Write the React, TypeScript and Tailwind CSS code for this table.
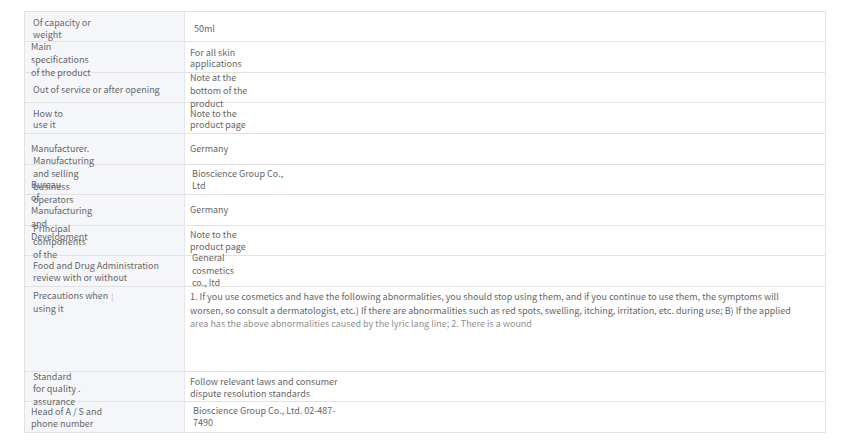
import React from "react";

type Cell = {
    lines: string[];
    pl: number;
    lh: number;
    shift?: number;
};

type Row = {
    h: number;
    top?: boolean;
    label: Cell;
    value: Cell;
};

const rows: Row[] = [
    {
        h: 30,
        label: { lines: ["Of capacity or", "weight"], pl: 8, lh: 12, shift: 2 },
        value: { lines: ["50ml"], pl: 9, lh: 12, shift: 2 },
    },
    {
        h: 31,
        label: { lines: ["Main", "specifications", "of the product"], pl: 6, lh: 13, shift: 2 },
        value: { lines: ["For all skin", "applications"], pl: 5, lh: 11.5, shift: 1 },
    },
    {
        h: 30,
        label: { lines: ["Out of service or after opening"], pl: 8, lh: 12, shift: 2 },
        value: { lines: ["Note at the", "bottom of the", "product"], pl: 5, lh: 13, shift: 3 },
    },
    {
        h: 31,
        label: { lines: ["How to", "use it"], pl: 8, lh: 11.5, shift: 1 },
        value: { lines: ["Note to the", "product page"], pl: 5, lh: 11.5, shift: 1 },
    },
    {
        h: 31,
        label: { lines: ["Manufacturer."], pl: 6, lh: 12 },
        value: { lines: ["Germany"], pl: 5, lh: 12 },
    },
    {
        h: 30,
        label: { lines: ["Manufacturing", "and selling", "business", "operators"], pl: 8, lh: 13 },
        value: { lines: ["Bioscience Group Co.,", "Ltd"], pl: 7, lh: 11.5 },
    },
    {
        h: 31,
        label: { lines: ["Bureau", "of", "Manufacturing", "and", "Development"], pl: 6, lh: 13 },
        value: { lines: ["Germany"], pl: 5, lh: 12 },
    },
    {
        h: 30,
        label: { lines: ["Principal", "components", "of the"], pl: 8, lh: 13, shift: 1 },
        value: { lines: ["Note to the", "product page"], pl: 5, lh: 12 },
    },
    {
        h: 31,
        label: { lines: ["Food and Drug Administration", "review with or without"], pl: 8, lh: 12, shift: 1 },
        value: { lines: ["General", "cosmetics", "co., ltd"], pl: 7, lh: 12.5 },
    },
    {
        h: 85,
        top: true,
        label: { lines: ["Precautions when", "using it"], pl: 8, lh: 11.5 },
        value: { lines: [], pl: 5, lh: 13.5 },
    },
    {
        h: 30,
        label: { lines: ["Standard", "for quality .", "assurance"], pl: 8, lh: 12.5, shift: 3 },
        value: { lines: ["Follow relevant laws and consumer", "dispute resolution standards"], pl: 5, lh: 12, shift: 1 },
    },
    {
        h: 31,
        label: { lines: ["Head of A / S and", "phone number"], pl: 6, lh: 12, shift: 1 },
        value: { lines: ["Bioscience Group Co., Ltd. 02-487-", "7490"], pl: 8, lh: 12 },
    },
];

const Lines = ({ cell, h }: { cell: Cell; h: number }) => {
    const shift = cell.shift ?? 0;
    return (
        <div
            className="flex flex-col justify-center whitespace-nowrap"
            style={{
                height: h,
                paddingLeft: cell.pl,
                paddingTop: shift > 0 ? shift * 2 : 0,
                lineHeight: `${cell.lh}px`,
            }}
        >
            {cell.lines.map((l, i) => (
                <span key={i} className="block">
                    {l}
                </span>
            ))}
        </div>
    );
};

export default function App() {
    return (
        <div
            className="min-h-[446px] w-[860px] bg-white pl-[24px] pt-[11px] text-[9px] text-[#666666]"
            style={{ fontFamily: '"Noto Sans CJK KR", "Noto Sans", sans-serif' }}
        >
            <table className="w-[802px] table-fixed border-collapse border border-[#e2e2e2]">
                <colgroup>
                    <col className="w-[160px]" />
                    <col />
                </colgroup>
                <tbody>
                    {rows.map((r, i) => (
                        <tr key={i} className="border-b border-[#e2e2e2]" style={{ height: r.h }}>
                            <td className="bg-[#f5f6fa] border-r border-[#e6e6ea] p-0 align-top">
                                {r.top ? (
                                    <div className="h-[84px] pl-[8px] pt-[3px] leading-[11.5px]">
                                        Precautions when
                                        <span className="ml-[3px] text-[7px] text-[#7d9ad8]">¦</span>
                                        <br />
                                        using it
                                    </div>
                                ) : (
                                    <Lines cell={r.label} h={r.h - 1} />
                                )}
                            </td>
                            <td className="p-0 align-top">
                                {r.top ? (
                                    <div className="h-[84px] pl-[5px] pt-[3px] pr-[40px] leading-[13.5px]">
                                        <p className="whitespace-nowrap">
                                            1. If you use cosmetics and have the following abnormalities, you should stop using them, and if you continue to use them, the symptoms will
                                        </p>
                                        <p className="whitespace-nowrap">
                                            worsen, so consult a dermatologist, etc.) If there are abnormalities such as red spots, swelling, itching, irritation, etc. during use; B) If the applied
                                        </p>
                                        <p className="whitespace-nowrap text-[#8f8f8f]">
                                            area has the above abnormalities caused by the lyric lang line; 2. There is a wound
                                        </p>
                                    </div>
                                ) : (
                                    <Lines cell={r.value} h={r.h - 1} />
                                )}
                            </td>
                        </tr>
                    ))}
                </tbody>
            </table>
        </div>
    );
}
